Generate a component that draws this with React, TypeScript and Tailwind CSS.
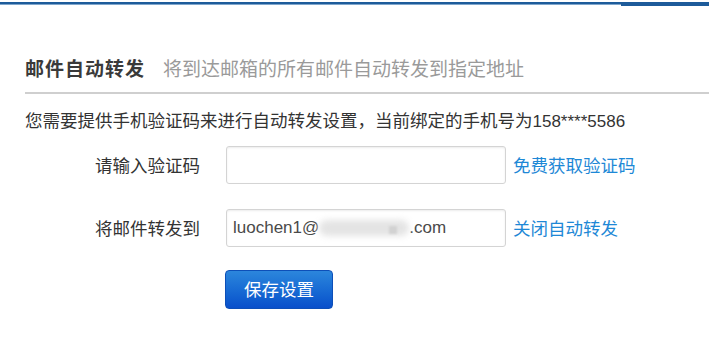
import React from 'react';

const font = 'font-["Microsoft_YaHei","Noto_Sans_CJK_SC","Liberation_Sans",sans-serif]';

const App: React.FC = () => {
  return (
    <div className={`w-[709px] h-[341px] bg-white overflow-hidden ${font} text-[#333]`}>
      {/* top bar */}
      <div className="mt-[2px] flex">
        <div className="flex-1 h-[3px] bg-[#1d5b9a] border-b border-[#7fa6cc]" />
        <div className="w-[88px] h-[4px] bg-[#1d5b9a]" />
      </div>

      <div className="pl-[25px]">
        {/* title */}
        <div className="mt-[48px] flex items-center h-[28px]">
          <span className="text-[19px] font-bold text-[#3a3a3a] tracking-[1px]">邮件自动转发</span>
          <span className="ml-[18px] text-[19px] text-[#9a9a9a]">将到达邮箱的所有邮件自动转发到指定地址</span>
        </div>
        <div className="mt-[10px] h-[2px] bg-[#cfcfcf]" />

        {/* notice */}
        <p className="mt-[14px] text-[17.5px] leading-[24px] text-[#333]">
          您需要提供手机验证码来进行自动转发设置，当前绑定的手机号为
          <span className="font-['Liberation_Sans',sans-serif] text-[17px]">158****5586</span>
        </p>

        {/* code row */}
        <div className="mt-[12px] flex items-center">
          <label className="ml-[70px] w-[105px] text-[17.5px] text-[#333]">请输入验证码</label>
          <div className="ml-[26px] w-[280px] h-[38px] rounded-[3px] border border-[#d4d4d4] shadow-[inset_0_1px_2px_rgba(0,0,0,0.08)] bg-white" />
          <a className="ml-[7px] text-[17.5px] text-[#1e88d6]">免费获取验证码</a>
        </div>

        {/* forward row */}
        <div className="mt-[25px] flex items-center">
          <label className="ml-[70px] w-[105px] text-[17.5px] text-[#333]">将邮件转发到</label>
          <div className="ml-[26px] w-[280px] h-[38px] rounded-[3px] border border-[#d4d4d4] shadow-[inset_0_1px_2px_rgba(0,0,0,0.08)] bg-white flex items-center pl-[6px] font-['Liberation_Sans',sans-serif] text-[17px] text-[#4a4a4a]">
            <span>luochen1@</span>
            <span className="relative w-[90px] h-[22px]">
              <span className="absolute inset-x-0 top-[3px] h-[16px] rounded-full bg-[#e4e4e4] blur-[3px]" />
              <span className="absolute left-[70px] top-[9px] w-[8px] h-[8px] bg-[#d2d2d2] blur-[1px]" />
            </span>
            <span>.com</span>
          </div>
          <a className="ml-[7px] text-[17.5px] text-[#1e88d6]">关闭自动转发</a>
        </div>

        {/* save */}
        <button className="mt-[23px] ml-[200px] w-[108px] h-[39px] rounded-[4px] border border-[#0d4fb8] bg-gradient-to-b from-[#2c86dc] to-[#0a4fcb] text-white text-[17.5px] flex items-center justify-center">
          保存设置
        </button>
      </div>
    </div>
  );
};

export default App;
